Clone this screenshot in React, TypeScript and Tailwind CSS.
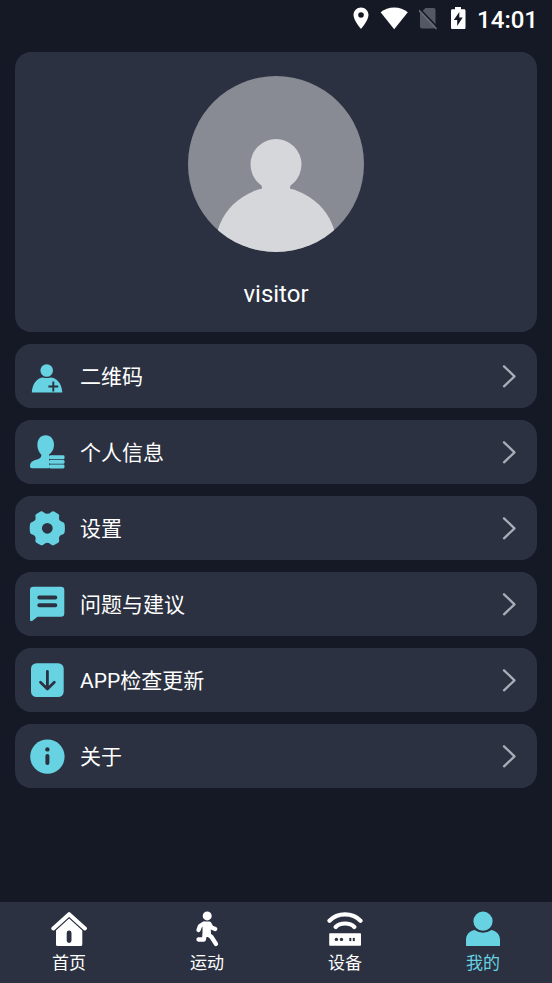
import type { ReactNode } from 'react';

const DARK = '#2b3140';

function StatusBar() {
  return (
    <header className="flex h-9 shrink-0 items-center justify-end gap-[11px] pr-[14px] text-white">
      <svg className="h-6 w-4" viewBox="0 0 16 24" fill="currentColor" aria-label="定位">
        <path
          fillRule="evenodd"
          d="M8 1.500C3.900 1.500 .5 4.800 .5 9C.5 14.300 8 23 8 23S15.500 14.300 15.500 9C15.500 4.800 12.100 1.500 8 1.500ZM8 6.200A2.800 2.800 0 1 1 8 11.800A2.800 2.800 0 0 1 8 6.200Z"
        />
      </svg>
      <svg className="h-6 w-7" viewBox="0 0 28 24" fill="currentColor" aria-label="无线网络">
        <path d="M.6 6.300C4.500 3.300 9 1.500 14.200 1.500S23.900 3.300 27.800 6.300L14.200 23.200Z" />
      </svg>
      <svg className="h-6 w-5" viewBox="0 0 20 24" aria-label="无 SIM 卡">
        <path d="M6.500 2H14.500C15.700 2 16.500 2.800 16.500 4V20.500C16.500 21.700 15.700 22.500 14.500 22.500H3C1.800 22.500 1 21.700 1 20.500V7.500Z" fill="#545863" />
        <path d="M.5 2.500L18.500 21.300" stroke="#151925" strokeWidth="1.600" />
        <path d="M-.3 4L17.500 23" stroke="#656974" strokeWidth="1.800" />
      </svg>
      <svg className="h-6 w-4" viewBox="0 0 16 24" aria-label="充电中">
        <path d="M5 1H11V3.200H14C15 3.200 15.500 3.800 15.500 4.700V21.500C15.500 22.500 15 23 14 23H2.500C1.500 23 1 22.500 1 21.500V4.700C1 3.800 1.500 3.200 2.500 3.200H5Z" fill="currentColor" />
        <path d="M9.300 6L3.800 13.900H7.200V20L12.700 11.600H9.300Z" fill="#151925" />
      </svg>
      <time className="pt-1 text-2xl leading-8 font-medium">14:01</time>
    </header>
  );
}

function Avatar() {
  return (
    <svg className="size-44" viewBox="0 0 176 176" role="img" aria-label="visitor">
      <defs>
        <clipPath id="avatar-disc">
          <circle cx="88" cy="88" r="88" />
        </clipPath>
      </defs>
      <g clipPath="url(#avatar-disc)">
        <rect width="176" height="176" fill="#888b93" />
        <g fill="#d5d7db">
          <circle cx="88" cy="88.500" r="25.500" />
          <path d="M68 104L73.500 109Q74.500 112 73.500 115H102.500Q101.500 112 102.500 109L108 104Z" />
          <circle cx="88" cy="172" r="61" />
        </g>
      </g>
    </svg>
  );
}

function Icon({ children }: { children: ReactNode }) {
  return (
    <svg className="size-9 shrink-0" viewBox="0 0 36 36" fill="currentColor" aria-hidden="true">
      {children}
    </svg>
  );
}

const menu: { label: string; icon: ReactNode }[] = [
  {
    label: '二维码',
    icon: (
      <>
        <circle cx="17.700" cy="12.500" r="6.300" />
        <path d="M2.800 34.500C3.200 25 9 19.500 14 19.500Q17.700 20.600 21.500 19.500C27 19.500 33 25 33.300 34.500Z" />
        <path d="M24.300 23.500V33.500M19.400 28.500H29.200" stroke={DARK} strokeWidth="1.900" />
      </>
    ),
  },
  {
    label: '个人信息',
    icon: (
      <>
        <path d="M16.700 1.300C11.500 1.300 8.400 5.500 8.400 11C8.400 15 10 18.500 12.300 20.700C12.600 23.500 10.500 24.800 7 25.800C2.500 27.200 1 29 1 32.500Q1 34.300 3 34.300H20V20.800C23 18.500 25 15 25 11C25 5.500 21.900 1.300 16.700 1.300Z" />
        <path d="M20.200 20.500H36V36H20.200Z" fill={DARK} />
        <rect x="20" y="21.300" width="15.500" height="3.900" rx="1.300" />
        <rect x="20" y="25.900" width="15.500" height="3.900" rx="1.300" />
        <rect x="20" y="30.500" width="15.500" height="3.900" rx="1.300" />
      </>
    ),
  },
  {
    label: '设置',
    icon: (
      <path
        fillRule="evenodd"
        d="M11.500 1.500Q13 .9 14.300 1.900Q18.300 5.700 22.300 1.900Q23.600 .9 25.100 1.500L29.200 3.900Q30.500 4.800 30.200 6.300C29.500 9.500 30.500 11.200 33.500 12Q35.300 12.600 35.600 14.200Q36.200 18.300 35.600 22.300Q35.300 24 33.500 24.600C30.500 25.400 29.500 27.100 30.200 30.300Q30.500 31.800 29.200 32.700L25.100 35.100Q23.600 35.700 22.300 34.700Q18.300 30.900 14.300 34.700Q13 35.700 11.500 35.100L7.400 32.700Q6.100 31.800 6.400 30.300C7.100 27.100 6.100 25.400 3.100 24.600Q1.300 24 1 22.300Q.4 18.300 1 14.200Q1.300 12.600 3.100 12C6.100 11.200 7.100 9.500 6.400 6.300Q6.100 4.800 7.400 3.900ZM18.300 12.900A5.400 5.400 0 1 0 18.300 23.700A5.400 5.400 0 0 0 18.300 12.900Z"
      />
    ),
  },
  {
    label: '问题与建议',
    icon: (
      <>
        <path d="M4.500 .8H32Q35.300 .8 35.300 4V27.500Q35.300 30.700 32 30.700H8.500L3.500 34.700Q1 36 1 33.500V4Q1 .8 4.500 .8Z" />
        <path d="M10.300 11.500H26.300M10.300 19.200H26.300" stroke={DARK} strokeWidth="4" strokeLinecap="round" />
      </>
    ),
  },
  {
    label: 'APP检查更新',
    icon: (
      <>
        <rect x="2" y="1.200" width="32.700" height="33.800" rx="5.500" />
        <path d="M18.400 9.500V27M11.500 20.300L18.400 27L25.300 20.300" fill="none" stroke={DARK} strokeWidth="2.800" strokeLinecap="round" strokeLinejoin="round" />
      </>
    ),
  },
  {
    label: '关于',
    icon: (
      <>
        <circle cx="18.400" cy="18.600" r="17.200" />
        <circle cx="18.400" cy="11.400" r="2.200" fill={DARK} />
        <path d="M18.400 17.900V25" stroke={DARK} strokeWidth="4" strokeLinecap="round" />
      </>
    ),
  },
];

const tabs: { label: string; active?: boolean; icon: ReactNode }[] = [
  {
    label: '首页',
    icon: (
      <>
        <path fillRule="evenodd" d="M5 19L18.100 7L31.300 19V33.500Q31.300 35 29.800 35H6.500Q5 35 5 33.500ZM18.100 19.600Q15.700 19.600 15.700 22V29.500Q15.700 31.900 18.100 31.900T20.500 29.500V22Q20.500 19.600 18.100 19.600Z" />
        <path d="M2.500 19.600L18.100 5.300L33.700 19.600" fill="none" stroke={DARK} strokeWidth="3" />
        <path d="M2.300 17.500L18.100 3.200L33.900 17.500" fill="none" stroke="currentColor" strokeWidth="4" strokeLinecap="round" strokeLinejoin="round" />
      </>
    ),
  },
  {
    label: '运动',
    icon: (
      <>
        <circle cx="18.200" cy="4.900" r="4.500" />
        <path d="M15 12H20L20.500 23.500H15Z" stroke="currentColor" strokeWidth="3" strokeLinejoin="round" />
        <path d="M14.500 12.800L11 15L9.500 19M20.500 13L22.500 16.500L26.200 18M16 22.500L14.800 28.500H9.500M18.500 23L22.500 26L27 33" fill="none" stroke="currentColor" strokeWidth="4.300" strokeLinecap="round" strokeLinejoin="round" />
      </>
    ),
  },
  {
    label: '设备',
    icon: (
      <>
        <path d="M2.500 9.800C10.500 1.300 25.500 1.300 33.500 9.800M8.700 16C13 11.300 23 11.300 27.300 16" fill="none" stroke="currentColor" strokeWidth="4.200" strokeLinecap="round" />
        <rect x="2.200" y="22.300" width="31.800" height="12.500" rx=".8" />
        <g fill={DARK}>
          <circle cx="9.400" cy="28.400" r="1.700" />
          <circle cx="14.500" cy="28.400" r="1.700" />
          <rect x="22.300" y="26.900" width="2" height="3.200" />
          <rect x="25.800" y="26.900" width="2" height="3.200" />
        </g>
      </>
    ),
  },
  {
    label: '我的',
    active: true,
    icon: (
      <>
        <circle cx="18" cy="10.200" r="9.600" />
        <path d="M1 35V29C1 23.500 4.500 20 9.500 19Q18 24.500 26.500 19C31.500 20 35 23.500 35 29V35Z" />
      </>
    ),
  },
];

export default function App() {
  return (
    <div className="flex min-h-screen flex-col bg-[#151925] font-[Roboto,'Noto_Sans_CJK_SC',sans-serif] text-white">
      <StatusBar />
      <main className="flex grow flex-col gap-3 px-[15px] pt-4 pb-6">
        <section className="flex flex-col items-center rounded-2xl bg-[#2b3140] pt-6 pb-[22px]">
          <Avatar />
          <h1 className="mt-[26px] text-2xl leading-8 font-normal">visitor</h1>
        </section>
        {menu.map(({ label, icon }) => (
          <button
            key={label}
            type="button"
            className="flex h-16 shrink-0 items-center rounded-2xl bg-[#2b3140] pr-5 pl-[14px] text-left text-[#67d3e2]"
          >
            <Icon>{icon}</Icon>
            <span className="ml-[15px] grow pt-0.5 text-[21px] leading-7 text-white">{label}</span>
            <svg className="h-6 w-4" viewBox="0 0 16 24" fill="none" stroke="#a9adb6" strokeWidth="2.300" aria-hidden="true">
              <path d="M3 2.300L13.500 12.300L3 22.300" strokeLinecap="round" strokeLinejoin="round" />
            </svg>
          </button>
        ))}
      </main>
      <nav className="grid shrink-0 grid-cols-4 bg-[#2b3140] pt-[9px] pb-2">
        {tabs.map(({ label, icon, active }) => (
          <a
            key={label}
            href="#"
            aria-current={active ? 'page' : undefined}
            className={`flex flex-col items-center gap-1 text-[17px] leading-6 ${active ? 'text-[#67d3e2]' : 'text-white'}`}
          >
            <Icon>{icon}</Icon>
            <span>{label}</span>
          </a>
        ))}
      </nav>
    </div>
  );
}
